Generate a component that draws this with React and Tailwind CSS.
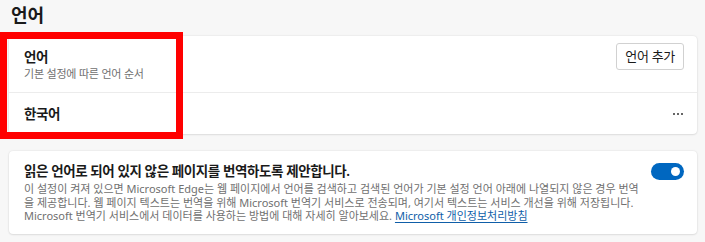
export default function App() {
  return (
    <div
      className="relative w-[705px] h-[242px] overflow-hidden bg-[#f7f7f7] text-[#1a1a1a]"
      style={{ fontFamily: '"Noto Sans", "Noto Sans CJK KR", sans-serif' }}
    >
      <div className="px-[9px] pt-[1px]">
        <h2 className="pl-[2px] text-[18px] font-semibold leading-[28px]">언어</h2>

        {/* 언어 목록 */}
        <div className="mt-[7px] w-[688px] rounded-[4px] bg-white shadow-[0_0_2px_rgba(0,0,0,0.12),0_1px_2px_rgba(0,0,0,0.08)]">
          <div className="flex h-[57px] items-start justify-between border-b border-[#ececec] pl-[15px] pr-[13px]">
            <div className="pt-[12px]">
              <p className="text-[13.5px] font-semibold leading-[18px] tracking-[-0.3px]">언어</p>
              <p className="text-[11px] leading-[16px] tracking-[-0.2px] text-[#707070]">기본 설정에 따른 언어 순서</p>
            </div>
            <button className="mt-[7px] h-[27px] rounded-[3px] border border-[#d1d1d1] bg-white px-[8px] text-[13px] leading-[25px] tracking-[-0.3px] text-[#1a1a1a]">
              언어 추가
            </button>
          </div>
          <div className="flex h-[41px] items-center justify-between pl-[15px] pr-[14px]">
            <p className="text-[13.5px] font-semibold leading-[18px] tracking-[-0.4px]">한국어</p>
            <span className="flex gap-[2px]">
              <span className="h-[2px] w-[2px] rounded-full bg-[#333]" />
              <span className="h-[2px] w-[2px] rounded-full bg-[#333]" />
              <span className="h-[2px] w-[2px] rounded-full bg-[#333]" />
            </span>
          </div>
        </div>

        {/* 번역 제안 */}
        <div className="mt-[17px] flex h-[83px] w-[688px] justify-between rounded-[4px] bg-white pl-[15px] pr-[13px] pt-[10px] shadow-[0_0_2px_rgba(0,0,0,0.12),0_1px_2px_rgba(0,0,0,0.08)]">
          <div className="w-[620px]">
            <p className="text-[13.5px] font-semibold leading-[20px] tracking-[-0.4px]">
              읽은 언어로 되어 있지 않은 페이지를 번역하도록 제안합니다.
            </p>
            <p className="mt-[1px] whitespace-nowrap text-[11px] leading-[13.5px] text-[#707070]">
              이 설정이 켜져 있으면 Microsoft Edge는 웹 페이지에서 언어를 검색하고 검색된 언어가 기본 설정 언어 아래에 나열되지 않은 경우 번역
              <br />
              을 제공합니다. 웹 페이지 텍스트는 번역을 위해 Microsoft 번역기 서비스로 전송되며, 여기서 텍스트는 서비스 개선을 위해 저장됩니다.
              <br />
              Microsoft 번역기 서비스에서 데이터를 사용하는 방법에 대해 자세히 알아보세요.{" "}
              <a className="text-[#0f5ea8] underline underline-offset-2">Microsoft 개인정보처리방침</a>
            </p>
          </div>
          <div className="mt-[2px] flex h-[17px] w-[33px] items-center justify-end rounded-full bg-[#0067c0] pr-[4px]">
            <span className="h-[9px] w-[9px] rounded-full bg-white" />
          </div>
        </div>
      </div>

      {/* 강조 표시 */}
      <div className="pointer-events-none absolute left-0 top-[32px] h-[107px] w-[183px] border-[7px] border-[#ff0000]" />
    </div>
  );
}
